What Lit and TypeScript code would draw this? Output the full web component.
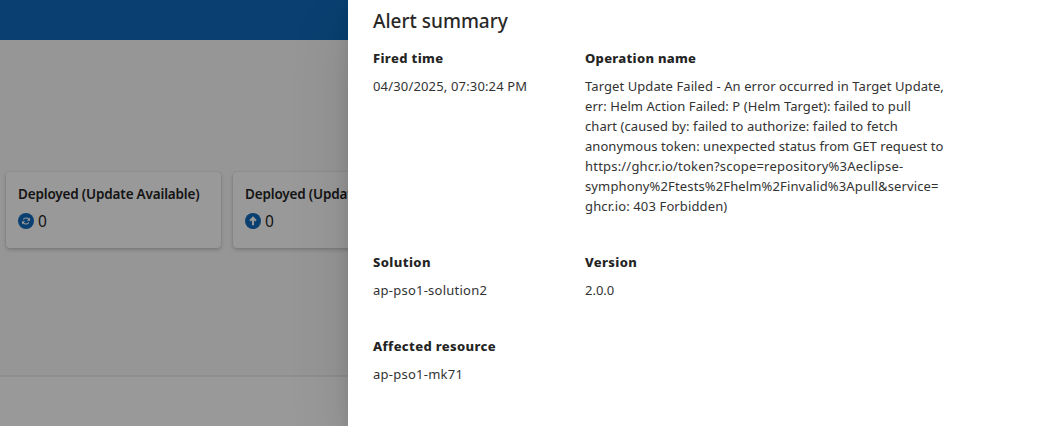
import { LitElement, html, css, svg } from "lit";
import { customElement, property } from "lit/decorators.js";

type IconName = "sync" | "up";

@customElement("status-card")
class StatusCard extends LitElement {
  @property() label = "";
  @property() count = "0";
  @property() icon: IconName = "sync";

  static styles = css`
    :host {
      display: block;
      box-sizing: border-box;
      flex: none;
      width: 215px;
      height: 76px;
      padding: 12px;
      background: #fff;
      border-radius: 4px;
      box-shadow: 0 0 2px rgba(0, 0, 0, 0.12), 0 2px 4px rgba(0, 0, 0, 0.18);
      color: #242424;
      white-space: nowrap;
      overflow: hidden;
    }
    .label {
      font-size: 13.5px;
      font-weight: 600;
      line-height: 20px;
      letter-spacing: -0.15px;
      word-spacing: -0.2px;
    }
    .value {
      display: flex;
      align-items: center;
      gap: 4px;
      margin-top: 6px;
      font-size: 15.5px;
      line-height: 22px;
    }
    svg {
      display: block;
      width: 16px;
      height: 16px;
    }
  `;

  render() {
    return html`
      <div class="label">${this.label}</div>
      <div class="value">
        <svg viewBox="0 0 16 16" fill="none">
          <circle cx="8" cy="8" r="8" fill="#0f6cbd" />
          ${this.icon === "sync"
            ? svg`<path d="M5.3 6.6C5.8 5.5 6.8 5 8 5c1.2 0 2.1.4 2.8 1.2M10.7 9.4c-.5 1.1-1.5 1.6-2.7 1.6-1.2 0-2.1-.4-2.8-1.2" stroke="#fff" stroke-width="1.1"/><path d="M12 4.5v3.2H8.8zM4 11.5V8.3h3.2z" fill="#fff"/>`
            : svg`<path d="M8 12.2V5M5.1 7.7l2.9-3 2.9 3" stroke="#fff" stroke-width="2" stroke-linejoin="miter"/>`}
        </svg>
        <span>${this.count}</span>
      </div>
    `;
  }
}

interface Line {
  text: string;
  spacing: number;
}

interface Field {
  label: Line;
  lines: Line[];
}

const line = (text: string, spacing = 0): Line => ({ text, spacing });

const fields: Field[] = [
  { label: line("Fired time", 0.36), lines: [line("04/30/2025, 07:30:24 PM", 0.16)] },
  {
    label: line("Operation name", 0.28),
    lines: [
      line("Target Update Failed - An error occurred in Target Update, ", 0.08),
      line("err: Helm Action Failed: P (Helm Target): failed to pull ", 0.07),
      line("chart (caused by: failed to authorize: failed to fetch ", 0.08),
      line("anonymous token: unexpected status from GET request to ", 0.05),
      line("https://ghcr.io/token?scope=repository%3Aeclipse-", 0.2),
      line("symphony%2Ftests%2Fhelm%2Finvalid%3Apull&service=", 0.13),
      line("ghcr.io: 403 Forbidden)", 0.13),
    ],
  },
  { label: line("Solution", 0.4), lines: [line("ap-pso1-solution2", 0.24)] },
  { label: line("Version", 0.36), lines: [line("2.0.0")] },
  { label: line("Affected resource", 0.35), lines: [line("ap-pso1-mk71", 0.25)] },
];

@customElement("app-root")
class AppRoot extends LitElement {
  static styles = css`
    :host {
      display: grid;
      grid-template-columns: 348px 1fr;
      height: 426px;
      overflow: hidden;
      background: #fff;
      font-family: "Noto Sans", "Open Sans", sans-serif;
    }
    .page {
      position: relative;
      display: flex;
      flex-direction: column;
      min-width: 0;
      overflow: hidden;
      background: #fafafa;
    }
    .topbar {
      flex: none;
      height: 40px;
      background: #0f6cbd;
    }
    .cards {
      display: flex;
      flex: none;
      gap: 12px;
      height: 203px;
      padding: 132px 0 0 6px;
    }
    .footer {
      flex: 1;
      border-top: 2px solid #ededed;
      background: #fff;
    }
    .scrim {
      position: absolute;
      inset: 0;
      background: rgba(0, 0, 0, 0.4);
    }
    .panel {
      position: relative;
      padding: 8px 25px 0;
      background: #fff;
      color: #333;
      box-shadow: 0 4.8px 14.4px rgba(0, 0, 0, 0.1), 0 25.6px 57.6px rgba(0, 0, 0, 0.12);
    }
    .title {
      margin: 0 0 13px;
      color: #292827;
      font-size: 19px;
      font-weight: 500;
      line-height: 27px;
      letter-spacing: 0;
    }
    .fields {
      display: grid;
      grid-template-columns: 212px 380px;
      row-gap: 36px;
      margin: 0;
    }
    .label {
      margin-bottom: 8px;
      color: #242424;
      font-size: 13px;
      font-weight: 800;
      line-height: 20px;
    }
    .value {
      margin: 0;
      font-size: 13px;
      line-height: 20px;
      white-space: nowrap;
    }
    .line {
      display: block;
    }
  `;

  private renderLine(l: Line) {
    return html`<span class="line" style="letter-spacing:${l.spacing}px">${l.text}</span>`;
  }

  render() {
    return html`
      <main class="page">
        <header class="topbar"></header>
        <section class="cards">
          <status-card label="Deployed (Update Available)" icon="sync"></status-card>
          <status-card label="Deployed (Update Pending)" icon="up"></status-card>
        </section>
        <section class="footer"></section>
        <div class="scrim"></div>
      </main>
      <aside class="panel">
        <h2 class="title">Alert summary</h2>
        <dl class="fields">
          ${fields.map(
            (f) => html`<div>
              <dt class="label">${this.renderLine(f.label)}</dt>
              <dd class="value">${f.lines.map((l) => this.renderLine(l))}</dd>
            </div>`
          )}
        </dl>
      </aside>
    `;
  }
}
